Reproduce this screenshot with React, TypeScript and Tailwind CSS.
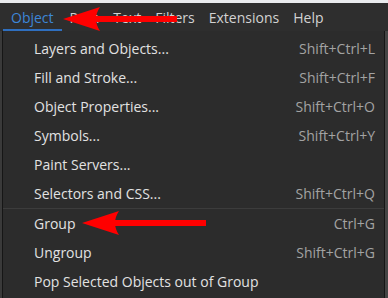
import React from "react";

const ITEMS: [string, string][] = [
  ["Layers and Objects...", "Shift+Ctrl+L"],
  ["Fill and Stroke...", "Shift+Ctrl+F"],
  ["Object Properties...", "Shift+Ctrl+O"],
  ["Symbols...", "Shift+Ctrl+Y"],
  ["Paint Servers...", ""],
  ["Selectors and CSS...", "Shift+Ctrl+Q"],
];

const ITEMS2: [string, string][] = [
  ["Group", "Ctrl+G"],
  ["Ungroup", "Shift+Ctrl+G"],
  ["Pop Selected Objects out of Group", ""],
];

const Row = ({ label, keys }: { label: string; keys: string }) => (
  <div className="flex h-[29px] items-center justify-between pl-[31px] pr-[9px]">
    <span className="text-[#e2e2e2]">{label}</span>
    <span className="text-[#a3a3a3]">{keys}</span>
  </div>
);

const Arrow = ({ className, width }: { className: string; width: number }) => (
  <svg className={className} width={width} height="26" viewBox={`0 0 ${width} 26`}>
    <rect x="30" y="10" width={width - 30} height="6" fill="#ff0000" />
    <path d="M0 13 L37 1 Q29 13 37 25 Z" fill="#ff0000" />
  </svg>
);

export default function App() {
  return (
    <div
      className="relative h-[298px] w-[388px] overflow-hidden bg-[#2a2a2a] text-[14px]"
      style={{ fontFamily: '"Open Sans", "Noto Sans", sans-serif' }}
    >
      <div className="h-[3px] bg-[#e9ebee]" />
      <div className="flex h-[28px] items-center bg-[#2e2e2e] text-[#d2d2d2]">
        <div className="relative ml-[3px] flex h-full items-center px-[8px] text-[#3d86d8]">
          Object
          <div className="absolute bottom-0 left-0 right-0 h-[2px] bg-[#2f6fbf]" />
        </div>
        <span className="ml-[8px]">Path</span>
        <span className="ml-[14px]">Text</span>
        <span className="ml-[14px]">Filters</span>
        <span className="ml-[14px]">Extensions</span>
        <span className="ml-[14px]">Help</span>
      </div>
      <div className="flex">
        <div className="w-[2px] bg-[#3a3a3a]" />
        <div className="w-[383px] border border-t-0 border-[#161616] bg-[#2c2c2c] pt-[3px]">
          {ITEMS.map(([l, k]) => (
            <Row key={l} label={l} keys={k} />
          ))}
          <div className="h-px bg-[#3c3c3c]" />
          {ITEMS2.map(([l, k]) => (
            <Row key={l} label={l} keys={k} />
          ))}
          <div className="h-[3px]" />
        </div>
        <div className="flex-1 bg-[#454545]" />
      </div>
      <Arrow className="absolute left-[63px] top-[6px]" width={114} />
      <Arrow className="absolute left-[82px] top-[210px]" width={124} />
    </div>
  );
}
